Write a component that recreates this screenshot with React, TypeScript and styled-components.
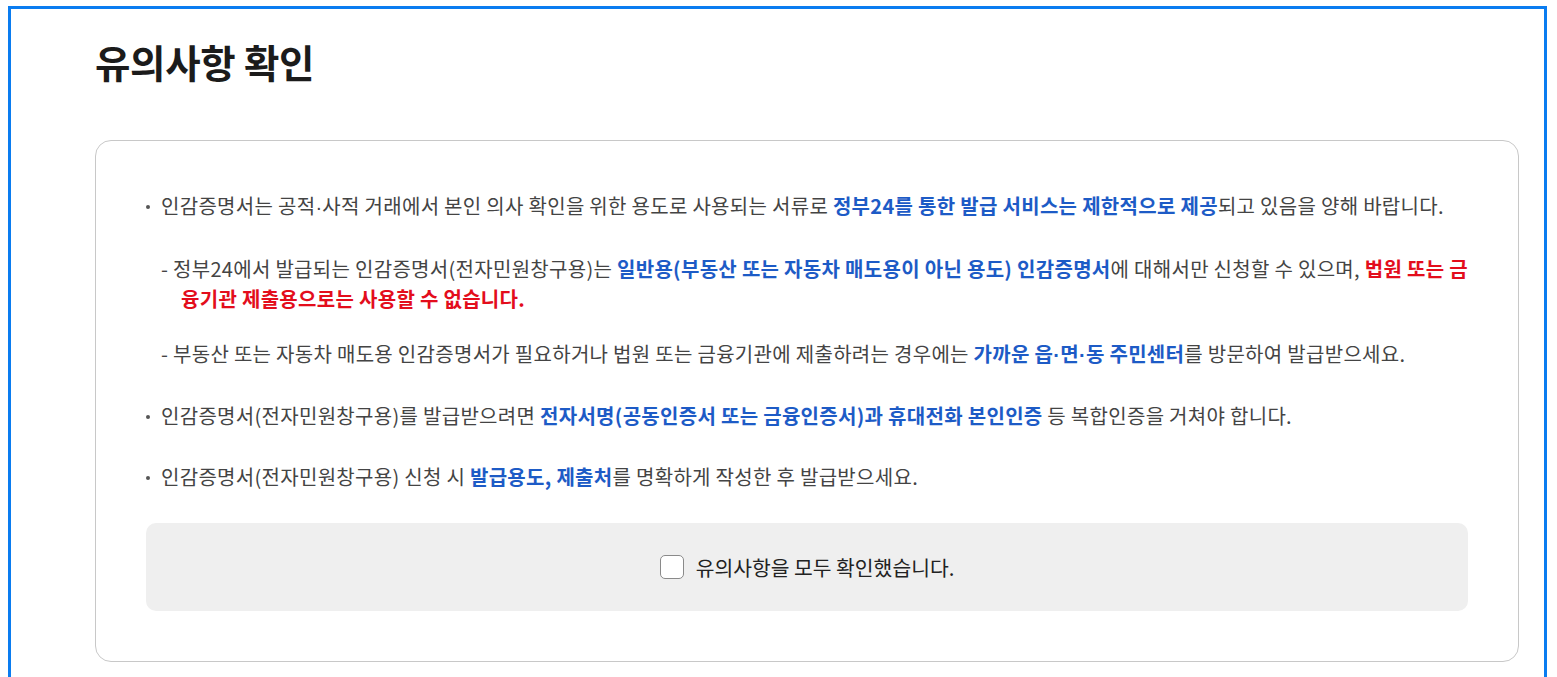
import { useState } from "react";
import styled, { createGlobalStyle } from "styled-components";

const GlobalStyles = createGlobalStyle`
  html, body {
    margin: 0;
    padding: 0;
    background: #ffffff;
  }
  body {
    font-family: "Noto Sans CJK KR", "Noto Sans", sans-serif;
    color: #444;
  }
`;

const Frame = styled.div`
  margin: 6px 10px 0 8px;
  height: 671px;
  box-sizing: border-box;
  border: 3px solid #0a7cf0;
  border-bottom: none;
  padding: 0 25px 0 84px;
  overflow: hidden;
`;

const Title = styled.h1`
  margin: 0;
  padding: 26px 0 0 0;
  height: 131px;
  box-sizing: border-box;
  font-size: 38.5px;
  font-weight: 700;
  line-height: 52px;
  color: #1b1b1b;
  letter-spacing: -0.3px;
`;

const Card = styled.section`
  border: 1px solid #c8c8c8;
  border-radius: 16px;
  padding: 50px 50px 50px 50px;
`;

const List = styled.ul`
  margin: 0;
  padding: 0;
  list-style: none;
`;

const Item = styled.li<{ $last?: boolean }>`
  position: relative;
  padding-left: 15px;
  font-size: 20px;
  line-height: 30px;
  letter-spacing: 0.3px;
  color: #444;
  margin-bottom: ${({ $last }) => ($last ? "0" : "31px")};
  &::before {
    content: "";
    position: absolute;
    left: 0;
    top: 14px;
    width: 4px;
    height: 4px;
    border-radius: 50%;
    background: #555;
  }
`;

const SubList = styled.ul`
  margin: 32px 0 0 0;
  padding: 0;
  list-style: none;
`;

const SubItem = styled.li`
  padding-left: 20px;
  text-indent: -20px;
  margin-bottom: 25px;
  &:last-child {
    margin-bottom: 0;
  }
`;

const Em = styled.strong<{ $tone?: "blue" | "red" }>`
  font-weight: 700;
  color: ${({ $tone }) => ($tone === "red" ? "#e30d1c" : "#1d5bc6")};
`;

const Dot = styled.span`
  font-family: "Liberation Sans", sans-serif;
`;

const Agree = styled.label`
  margin-top: 31px;
  display: flex;
  align-items: center;
  justify-content: center;
  gap: 12px;
  height: 88px;
  background: #efefef;
  border-radius: 10px;
  cursor: pointer;
  font-size: 20.4px;
  color: #222;
`;

const Box = styled.span<{ $checked: boolean }>`
  width: 24px;
  height: 24px;
  box-sizing: border-box;
  border: 1px solid #8a8a8a;
  border-radius: 5px;
  background: ${({ $checked }) => ($checked ? "#1d5bc6" : "#fff")};
  display: inline-flex;
  align-items: center;
  justify-content: center;
`;

const HiddenInput = styled.input`
  position: absolute;
  opacity: 0;
  width: 0;
  height: 0;
`;

export default function App() {
  const [checked, setChecked] = useState(false);

  return (
    <>
      <GlobalStyles />
      <Frame>
        <Title>유의사항 확인</Title>
        <Card>
          <List>
            <Item>
              인감증명서는 공적<Dot>·</Dot>사적 거래에서 본인 의사 확인을 위한 용도로 사용되는
              서류로 <Em>정부24를 통한 발급 서비스는 제한적으로 제공</Em>되고 있음을 양해
              바랍니다.
              <SubList>
                <SubItem>
                  - 정부24에서 발급되는 인감증명서(전자민원창구용)는{" "}
                  <Em>일반용(부동산 또는 자동차 매도용이 아닌 용도) 인감증명서</Em>에 대해서만
                  신청할 수 있으며, <Em $tone="red">법원 또는 금융기관 제출용으로는 사용할 수 없습니다.</Em>
                </SubItem>
                <SubItem>
                  - 부동산 또는 자동차 매도용 인감증명서가 필요하거나 법원 또는 금융기관에 제출하려는
                  경우에는{" "}
                  <Em>
                    가까운 읍<Dot>·</Dot>면<Dot>·</Dot>동 주민센터
                  </Em>
                  를 방문하여 발급받으세요.
                </SubItem>
              </SubList>
            </Item>
            <Item>
              인감증명서(전자민원창구용)를 발급받으려면{" "}
              <Em>전자서명(공동인증서 또는 금융인증서)과 휴대전화 본인인증</Em> 등 복합인증을 거쳐야
              합니다.
            </Item>
            <Item $last>
              인감증명서(전자민원창구용) 신청 시 <Em>발급용도, 제출처</Em>를 명확하게 작성한 후
              발급받으세요.
            </Item>
          </List>
          <Agree>
            <HiddenInput
              type="checkbox"
              checked={checked}
              onChange={(e) => setChecked(e.target.checked)}
            />
            <Box $checked={checked}>
              {checked && (
                <svg width="14" height="14" viewBox="0 0 14 14">
                  <path d="M2 7l3.5 3.5L12 4" stroke="#fff" strokeWidth="2" fill="none" />
                </svg>
              )}
            </Box>
            유의사항을 모두 확인했습니다.
          </Agree>
        </Card>
      </Frame>
    </>
  );
}
